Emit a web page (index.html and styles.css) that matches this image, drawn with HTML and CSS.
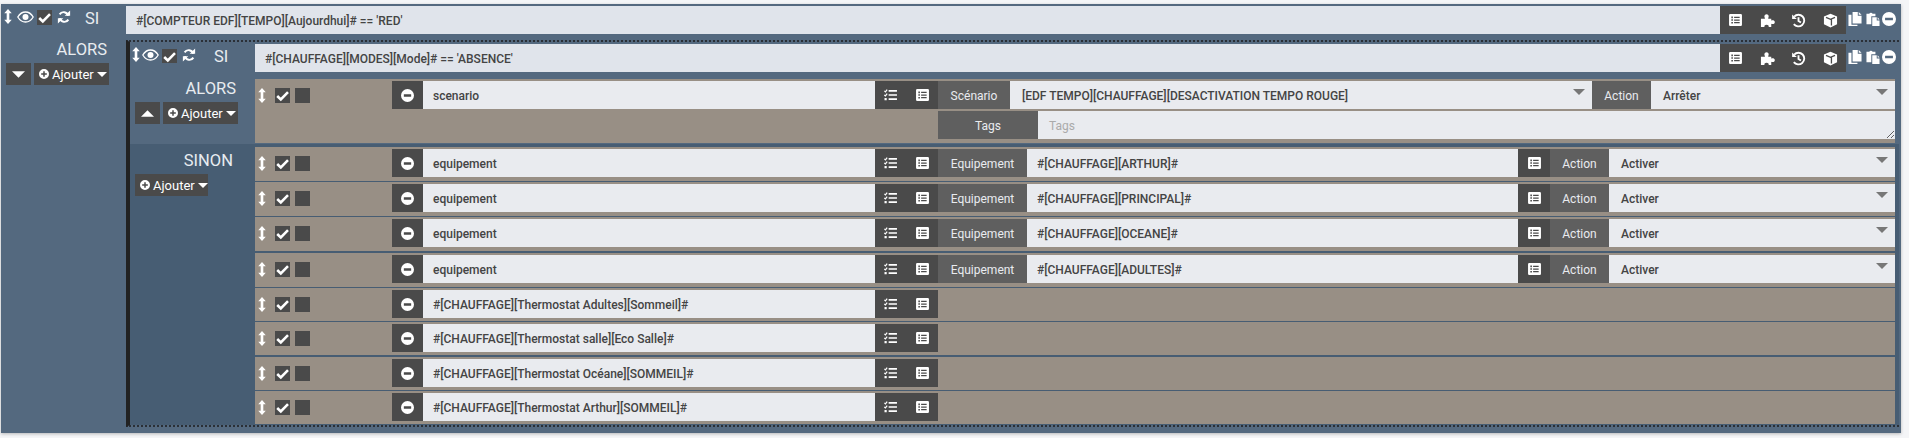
FILE: index.html
```html
<!DOCTYPE html>
<html lang="fr">
<head>
<meta charset="utf-8">
<title>Scénario</title>
<link rel="stylesheet" href="styles.css">
</head>
<body>
<svg class="defs" xmlns="http://www.w3.org/2000/svg">
  <symbol id="i-sort" viewBox="0 0 8 16"><path d="M4 0L8 4.5H5.4V11.5H8L4 16L0 11.5H2.6V4.5H0Z"/></symbol>
  <symbol id="i-eye" viewBox="0 0 17 12"><path fill="none" stroke="currentColor" stroke-width="1.3" d="M.8 6C2.8 2.6 5.4 1 8.5 1s5.7 1.6 7.7 5c-2 3.4-4.6 5-7.7 5S2.8 9.4.8 6z"/><circle cx="8.5" cy="6" r="3"/></symbol>
  <symbol id="i-check" viewBox="0 0 15 15"><path fill="none" stroke="currentColor" stroke-width="2.6" d="M2.2 8l3.6 3.4L13 4.2"/></symbol>
  <symbol id="i-sync" viewBox="0 0 16 16"><path d="M15 .5v6.2H8.8zM1 15.5V9.3h6.2z"/><path fill="none" stroke="currentColor" stroke-width="2.2" d="M12.8 6.5A5.4 5.4 0 0 0 3 5M3.2 9.5A5.4 5.4 0 0 0 13 11"/></symbol>
  <symbol id="i-list" viewBox="0 0 14 13"><path fill-rule="evenodd" d="M1.3 0h11.4A1.3 1.3 0 0 1 14 1.3v10.4a1.3 1.3 0 0 1-1.3 1.3H1.3A1.3 1.3 0 0 1 0 11.7V1.3A1.3 1.3 0 0 1 1.3 0zM2.5 2.8v1.7h1.7V2.8zM5.5 3v1.3h6V3zM2.5 5.7v1.7h1.7V5.7zM5.5 5.9v1.3h6V5.9zM2.5 8.6v1.7h1.7V8.6zM5.5 8.8v1.3h6V8.8z"/></symbol>
  <symbol id="i-tasks" viewBox="0 0 14 13"><path d="M5 1.2h9v1.7H5zM5 5.6h9v1.7H5zM5 10.1h9v1.7H5z"/><path fill="none" stroke="currentColor" stroke-width="1.3" d="M.3 2l1.2 1.1L3.4.6M.3 6.4l1.2 1.1 1.9-2.5"/><rect x=".5" y="9.8" width="2.4" height="2.4"/></symbol>
  <symbol id="i-puzzle" viewBox="0 0 16 16"><path d="M1 6H5.2V5C4.4 4.4 4.4 1.2 7 1.2S9.6 4.4 8.8 5V6H12V8.2C13 7.4 15.8 7.6 15.8 9.8S13 12.2 12 11.4V15H9.2C9.8 13.6 8.8 12.6 7 12.6S4.2 13.6 4.8 15H1Z"/></symbol>
  <symbol id="i-history" viewBox="0 0 16 16"><path d="M1.2 1.5v5h5z"/><path fill="none" stroke="currentColor" stroke-width="2" d="M3.4 3.8A6.2 6.2 0 1 1 3 11.8M8 4.5V8.6L10.6 10.2"/></symbol>
  <symbol id="i-cube" viewBox="0 0 16 16"><path d="M8 .8L15 3.6V12L8 15.4L1 12V3.6Z"/><path fill="none" stroke="#4a4a4a" stroke-width="1.4" d="M3.2 4.6L8 6.8L12.8 4.6M9 7V13.2"/></symbol>
  <symbol id="i-copy" viewBox="0 0 14 15"><path d="M4.4 0H10V4H14V12.2H4.4zM11 0l3 3h-3zM0 3H3.2V13.6H9.6V15H0z"/></symbol>
  <symbol id="i-paste" viewBox="0 0 14 15"><path d="M0 1.8H3A2 2 0 0 1 6.6 1.8H9.6V4.6H5.2V13H0zM6.2 5.6H11V9H14V15H6.2zM12 5.6l2 2.4h-2z"/></symbol>
  <symbol id="i-minus" viewBox="0 0 16 16"><path fill-rule="evenodd" d="M8 0a8 8 0 1 0 0 16A8 8 0 0 0 8 0zM3.5 6.6h9v2.8h-9z"/></symbol>
  <symbol id="i-plus" viewBox="0 0 16 16"><path fill-rule="evenodd" d="M8 0a8 8 0 1 0 0 16A8 8 0 0 0 8 0zM6.8 3.5h2.4v3.3h3.3v2.4H9.2v3.3H6.8V9.2H3.5V6.8h3.3z"/></symbol>
  <symbol id="i-down" viewBox="0 0 12 6"><path d="M0 0H12L6 6Z"/></symbol>
  <symbol id="i-up" viewBox="0 0 12 6"><path d="M0 6H12L6 0Z"/></symbol>
</svg>

<main class="block block-outer">
  <div class="head head-outer">
    <div class="col-tools">
      <svg class="ic-sort"><use href="#i-sort"/></svg>
      <svg class="ic-eye"><use href="#i-eye"/></svg>
      <span class="box"><svg class="ic-check"><use href="#i-check"/></svg></span>
      <svg class="ic-sync"><use href="#i-sync"/></svg>
      <span class="si">SI</span>
    </div>
    <div class="cond">#[COMPTEUR EDF][TEMPO][Aujourdhui]# == 'RED'</div>
    <div class="btn-group">
      <span class="btn"><svg class="ic-list"><use href="#i-list"/></svg></span>
      <span class="btn"><svg class="ic-big"><use href="#i-puzzle"/></svg></span>
      <span class="btn"><svg class="ic-big"><use href="#i-history"/></svg></span>
      <span class="btn"><svg class="ic-big"><use href="#i-cube"/></svg></span>
    </div>
    <div class="extras">
      <svg class="ic-copy"><use href="#i-copy"/></svg>
      <svg class="ic-paste"><use href="#i-paste"/></svg>
      <svg class="ic-minus"><use href="#i-minus"/></svg>
    </div>
  </div>

  <div class="then">
    <div class="side side-outer">
      <div class="side-title">ALORS</div>
      <div class="side-btns">
        <span class="sq"><svg class="ic-caret-lg"><use href="#i-down"/></svg></span>
        <span class="add"><svg class="ic-plus"><use href="#i-plus"/></svg>Ajouter<svg class="ic-caret"><use href="#i-down"/></svg></span>
      </div>
    </div>

    <section class="block-inner">
      <div class="head head-inner">
        <div class="col-tools">
          <svg class="ic-sort"><use href="#i-sort"/></svg>
          <svg class="ic-eye"><use href="#i-eye"/></svg>
          <span class="box"><svg class="ic-check"><use href="#i-check"/></svg></span>
          <svg class="ic-sync"><use href="#i-sync"/></svg>
          <span class="si">SI</span>
        </div>
        <div class="cond">#[CHAUFFAGE][MODES][Mode]# == 'ABSENCE'</div>
        <div class="btn-group">
          <span class="btn"><svg class="ic-list"><use href="#i-list"/></svg></span>
          <span class="btn"><svg class="ic-big"><use href="#i-puzzle"/></svg></span>
          <span class="btn"><svg class="ic-big"><use href="#i-history"/></svg></span>
          <span class="btn"><svg class="ic-big"><use href="#i-cube"/></svg></span>
        </div>
        <div class="extras">
          <svg class="ic-copy"><use href="#i-copy"/></svg>
          <svg class="ic-paste"><use href="#i-paste"/></svg>
          <svg class="ic-minus"><use href="#i-minus"/></svg>
        </div>
      </div>

      <div class="section section-alors">
        <div class="side">
          <div class="side-title">ALORS</div>
          <div class="side-btns">
            <span class="sq"><svg class="ic-caret-lg"><use href="#i-up"/></svg></span>
            <span class="add"><svg class="ic-plus"><use href="#i-plus"/></svg>Ajouter<svg class="ic-caret"><use href="#i-down"/></svg></span>
          </div>
        </div>
        <div class="rows">
          <div class="row row-scenario">
            <div class="line">
              <div class="tools"><svg class="ic-sort"><use href="#i-sort"/></svg><span class="box"><svg class="ic-check"><use href="#i-check"/></svg></span><span class="box"></span></div>
              <span class="btn btn-minus"><svg class="ic-minus-btn"><use href="#i-minus"/></svg></span>
              <div class="field name">scenario</div>
              <div class="btn-pair"><span class="btn"><svg class="ic-list"><use href="#i-tasks"/></svg></span><span class="btn"><svg class="ic-list"><use href="#i-list"/></svg></span></div>
              <span class="label l-scenario">Scénario</span>
              <div class="field value v-scenario">[EDF TEMPO][CHAUFFAGE][DESACTIVATION TEMPO ROUGE]<svg class="ic-sel"><use href="#i-down"/></svg></div>
              <span class="label l-action">Action</span>
              <div class="field value v-grow">Arrêter<svg class="ic-sel"><use href="#i-down"/></svg></div>
            </div>
            <div class="line line-tags">
              <span class="label l-tags">Tags</span>
              <textarea class="tags" placeholder="Tags"></textarea>
            </div>
          </div>
        </div>
      </div>

      <div class="section section-sinon">
        <div class="side">
          <div class="side-title">SINON</div>
          <div class="side-btns">
            <span class="add add-tight"><svg class="ic-plus"><use href="#i-plus"/></svg>Ajouter<svg class="ic-caret"><use href="#i-down"/></svg></span>
          </div>
        </div>
        <div class="rows">
          <div class="row">
            <div class="line">
              <div class="tools"><svg class="ic-sort"><use href="#i-sort"/></svg><span class="box"><svg class="ic-check"><use href="#i-check"/></svg></span><span class="box"></span></div>
              <span class="btn btn-minus"><svg class="ic-minus-btn"><use href="#i-minus"/></svg></span>
              <div class="field name">equipement</div>
              <div class="btn-pair"><span class="btn"><svg class="ic-list"><use href="#i-tasks"/></svg></span><span class="btn"><svg class="ic-list"><use href="#i-list"/></svg></span></div>
              <span class="label l-equip">Equipement</span>
              <div class="field value v-equip">#[CHAUFFAGE][ARTHUR]#</div>
              <span class="btn btn-one"><svg class="ic-list"><use href="#i-list"/></svg></span>
              <span class="label l-action">Action</span>
              <div class="field value v-grow">Activer<svg class="ic-sel"><use href="#i-down"/></svg></div>
            </div>
          </div>
          <div class="row">
            <div class="line">
              <div class="tools"><svg class="ic-sort"><use href="#i-sort"/></svg><span class="box"><svg class="ic-check"><use href="#i-check"/></svg></span><span class="box"></span></div>
              <span class="btn btn-minus"><svg class="ic-minus-btn"><use href="#i-minus"/></svg></span>
              <div class="field name">equipement</div>
              <div class="btn-pair"><span class="btn"><svg class="ic-list"><use href="#i-tasks"/></svg></span><span class="btn"><svg class="ic-list"><use href="#i-list"/></svg></span></div>
              <span class="label l-equip">Equipement</span>
              <div class="field value v-equip">#[CHAUFFAGE][PRINCIPAL]#</div>
              <span class="btn btn-one"><svg class="ic-list"><use href="#i-list"/></svg></span>
              <span class="label l-action">Action</span>
              <div class="field value v-grow">Activer<svg class="ic-sel"><use href="#i-down"/></svg></div>
            </div>
          </div>
          <div class="row row-thick">
            <div class="line">
              <div class="tools"><svg class="ic-sort"><use href="#i-sort"/></svg><span class="box"><svg class="ic-check"><use href="#i-check"/></svg></span><span class="box"></span></div>
              <span class="btn btn-minus"><svg class="ic-minus-btn"><use href="#i-minus"/></svg></span>
              <div class="field name">equipement</div>
              <div class="btn-pair"><span class="btn"><svg class="ic-list"><use href="#i-tasks"/></svg></span><span class="btn"><svg class="ic-list"><use href="#i-list"/></svg></span></div>
              <span class="label l-equip">Equipement</span>
              <div class="field value v-equip">#[CHAUFFAGE][OCEANE]#</div>
              <span class="btn btn-one"><svg class="ic-list"><use href="#i-list"/></svg></span>
              <span class="label l-action">Action</span>
              <div class="field value v-grow">Activer<svg class="ic-sel"><use href="#i-down"/></svg></div>
            </div>
          </div>
          <div class="row">
            <div class="line">
              <div class="tools"><svg class="ic-sort"><use href="#i-sort"/></svg><span class="box"><svg class="ic-check"><use href="#i-check"/></svg></span><span class="box"></span></div>
              <span class="btn btn-minus"><svg class="ic-minus-btn"><use href="#i-minus"/></svg></span>
              <div class="field name">equipement</div>
              <div class="btn-pair"><span class="btn"><svg class="ic-list"><use href="#i-tasks"/></svg></span><span class="btn"><svg class="ic-list"><use href="#i-list"/></svg></span></div>
              <span class="label l-equip">Equipement</span>
              <div class="field value v-equip">#[CHAUFFAGE][ADULTES]#</div>
              <span class="btn btn-one"><svg class="ic-list"><use href="#i-list"/></svg></span>
              <span class="label l-action">Action</span>
              <div class="field value v-grow">Activer<svg class="ic-sel"><use href="#i-down"/></svg></div>
            </div>
          </div>
          <div class="row row-short">
            <div class="line">
              <div class="tools"><svg class="ic-sort"><use href="#i-sort"/></svg><span class="box"><svg class="ic-check"><use href="#i-check"/></svg></span><span class="box"></span></div>
              <span class="btn btn-minus"><svg class="ic-minus-btn"><use href="#i-minus"/></svg></span>
              <div class="field name">#[CHAUFFAGE][Thermostat Adultes][Sommeil]#</div>
              <div class="btn-pair"><span class="btn"><svg class="ic-list"><use href="#i-tasks"/></svg></span><span class="btn"><svg class="ic-list"><use href="#i-list"/></svg></span></div>
            </div>
          </div>
          <div class="row row-short row-thick">
            <div class="line">
              <div class="tools"><svg class="ic-sort"><use href="#i-sort"/></svg><span class="box"><svg class="ic-check"><use href="#i-check"/></svg></span><span class="box"></span></div>
              <span class="btn btn-minus"><svg class="ic-minus-btn"><use href="#i-minus"/></svg></span>
              <div class="field name">#[CHAUFFAGE][Thermostat salle][Eco Salle]#</div>
              <div class="btn-pair"><span class="btn"><svg class="ic-list"><use href="#i-tasks"/></svg></span><span class="btn"><svg class="ic-list"><use href="#i-list"/></svg></span></div>
            </div>
          </div>
          <div class="row row-short">
            <div class="line">
              <div class="tools"><svg class="ic-sort"><use href="#i-sort"/></svg><span class="box"><svg class="ic-check"><use href="#i-check"/></svg></span><span class="box"></span></div>
              <span class="btn btn-minus"><svg class="ic-minus-btn"><use href="#i-minus"/></svg></span>
              <div class="field name">#[CHAUFFAGE][Thermostat Océane][SOMMEIL]#</div>
              <div class="btn-pair"><span class="btn"><svg class="ic-list"><use href="#i-tasks"/></svg></span><span class="btn"><svg class="ic-list"><use href="#i-list"/></svg></span></div>
            </div>
          </div>
          <div class="row row-short row-last">
            <div class="line">
              <div class="tools"><svg class="ic-sort"><use href="#i-sort"/></svg><span class="box"><svg class="ic-check"><use href="#i-check"/></svg></span><span class="box"></span></div>
              <span class="btn btn-minus"><svg class="ic-minus-btn"><use href="#i-minus"/></svg></span>
              <div class="field name">#[CHAUFFAGE][Thermostat Arthur][SOMMEIL]#</div>
              <div class="btn-pair"><span class="btn"><svg class="ic-list"><use href="#i-tasks"/></svg></span><span class="btn"><svg class="ic-list"><use href="#i-list"/></svg></span></div>
            </div>
          </div>
        </div>
      </div>
    </section>
  </div>
</main>
</body>
</html>
```

FILE: styles.css
```css
* { box-sizing: border-box; }
html, body { height: 100%; }
body {
  margin: 0;
  padding: 4px 8px 0 1px;
  background: #f4f5f7;
  font-family: Roboto, "Liberation Sans", sans-serif;
  font-size: 12px;
  color: #444;
  overflow: hidden;
}
svg { display: block; fill: currentColor; flex: none; }
.defs { display: none; }

.block-outer {
  height: 429px;
  padding-top: 2px;
  background: #54697f;
  box-shadow: 0 1px 3px rgba(0, 0, 0, .25);
  color: #fff;
}

.head { display: flex; height: 28px; }
.col-tools {
  width: 125px;
  flex: none;
  display: flex;
  align-items: flex-start;
  color: #fff;
}
.head-outer .col-tools { padding-left: 3px; }
.head-inner .col-tools { padding-left: 2px; }
.ic-sort { width: 8px; height: 15px; margin-top: 3px; color: #fff; }
.ic-eye { width: 17px; height: 12px; margin-top: 5px; }
.head-outer .ic-eye { margin-left: 5px; }
.head-inner .ic-eye { margin-left: 2px; }
.box {
  width: 15px;
  height: 15px;
  background: #4a4a4a;
  display: block;
  flex: none;
  color: #fff;
}
.col-tools .box { margin: 4px 0 0 3px; }
.head-inner .col-tools .box { margin-top: 5px; height: 14px; }
.ic-check { width: 15px; height: 15px; }
.ic-sync { width: 14px; height: 14px; margin: 4px 0 0 5px; }
.si { font-size: 16.5px; line-height: 20px; margin: 3px 0 0 14px; color: #e8ecf0; }
.head-inner .si { margin: 3px 0 0 18px; }
.cond {
  flex: 1;
  min-width: 0;
  background: #e0e4eb;
  color: #444;
  font-weight: 500;
  line-height: 30px;
  padding-left: 10px;
}
.btn-group { display: flex; width: 126px; flex: none; background: #4a4a4a; }
.btn {
  width: 31.5px;
  height: 28px;
  flex: none;
  background: #4a4a4a;
  color: #fff;
  display: flex;
  align-items: center;
  justify-content: center;
}
.ic-list { width: 13px; height: 12px; }
.ic-big { width: 15px; height: 15px; }
.extras { display: flex; align-items: flex-start; flex: none; padding: 6px 0 0 2px; color: #fff; }
.head-outer .extras { width: 55px; }
.head-inner .extras { width: 53px; }
.ic-copy { width: 14px; height: 14px; }
.ic-paste { width: 14px; height: 14px; margin-left: 4px; }
.ic-minus { width: 14px; height: 14px; margin-left: 2px; }

.then { display: flex; }
.side { width: 125px; flex: none; }
.side-title {
  font-size: 16.5px;
  line-height: 22px;
  color: #e8ecf0;
  text-align: right;
  padding-right: 19px;
  margin-bottom: 2px;
}
.side-outer { padding-top: 5px; }
.side-btns { display: flex; gap: 3px; padding-left: 5px; }
.sq, .add {
  height: 22px;
  background: #4a4a4a;
  color: #fff;
  display: flex;
  align-items: center;
  font-size: 13px;
}
.sq { width: 25px; justify-content: center; }
.add { padding: 0 5px; width: 75px; }
.add-tight { width: 73px; }
.ic-plus { width: 10px; height: 10px; margin-right: 3px; }
.ic-caret { width: 10px; height: 5px; margin-left: 3px; }
.ic-caret-lg { width: 13px; height: 7px; }

.block-inner {
  width: 1773px;
  margin-top: 6px;
  border-left: 4px solid #222;
  border-top: 2px dotted #2a2f36;
  border-bottom: 2px dotted #2a2f36;
  padding-top: 2px;
}
.section { display: flex; }
.section .side { padding-top: 6px; }
.section-alors { padding-bottom: 1px; }
.section-sinon { background: #475d73; padding-bottom: 1px; }
.section-sinon .side-title { padding-right: 22px; }
.rows { flex: 1; min-width: 0; padding-right: 4px; }
.section-alors .rows { padding-top: 7px; }
.section-sinon .rows { padding-top: 3px; }

.row {
  background: #988f85;
  padding: 2px 0 4px;
  border-bottom: 1px solid #475d73;
}
.row-thick { border-bottom-width: 2px; }
.row-short { padding-bottom: 3px; }
.row-last { border-bottom: 0; }
.row-scenario { border-bottom: 0; height: 64px; }
.line { display: flex; height: 28px; }
.line-tags { margin: 2px 0 0 683px; }
.tools { width: 137px; flex: none; display: flex; align-items: flex-start; padding-left: 3px; }
.tools .ic-sort { margin-top: 7px; }
.tools .box { margin-top: 7px; }
.tools .box:nth-of-type(1) { margin-left: 9px; }
.tools .box:nth-of-type(2) { margin-left: 5px; }
.btn-minus { width: 31px; }
.ic-minus-btn { width: 13px; height: 13px; }
.field {
  background: #e9ebef;
  color: #444;
  font-weight: 500;
  line-height: 30px;
  white-space: nowrap;
}
.name { width: 452px; flex: none; padding-left: 10px; }
.btn-pair { display: flex; width: 63px; flex: none; }
.label {
  background: #5f5f5f;
  color: #e9ebef;
  line-height: 30px;
  text-align: center;
  flex: none;
}
.l-scenario { width: 72px; }
.l-equip { width: 89px; }
.l-action { width: 59px; }
.l-tags { width: 100px; }
.value { display: flex; justify-content: space-between; align-items: flex-start; padding-left: 12px; }
.v-scenario { width: 582px; flex: none; }
.v-equip { width: 491px; flex: none; padding-left: 10px; }
.v-grow { flex: 1; min-width: 0; }
.btn-one { width: 32px; }
.ic-sel { width: 12px; height: 6px; margin: 8px 7px 0 0; color: #777; }
.tags {
  flex: 1;
  min-width: 0;
  height: 28px;
  border: 0;
  outline: 0;
  margin: 0;
  padding: 7px 11px;
  background: #e9ebef;
  font: 12px/16px Roboto, "Liberation Sans", sans-serif;
  color: #444;
  resize: both;
}
.tags::placeholder { color: #aaa; }
```
